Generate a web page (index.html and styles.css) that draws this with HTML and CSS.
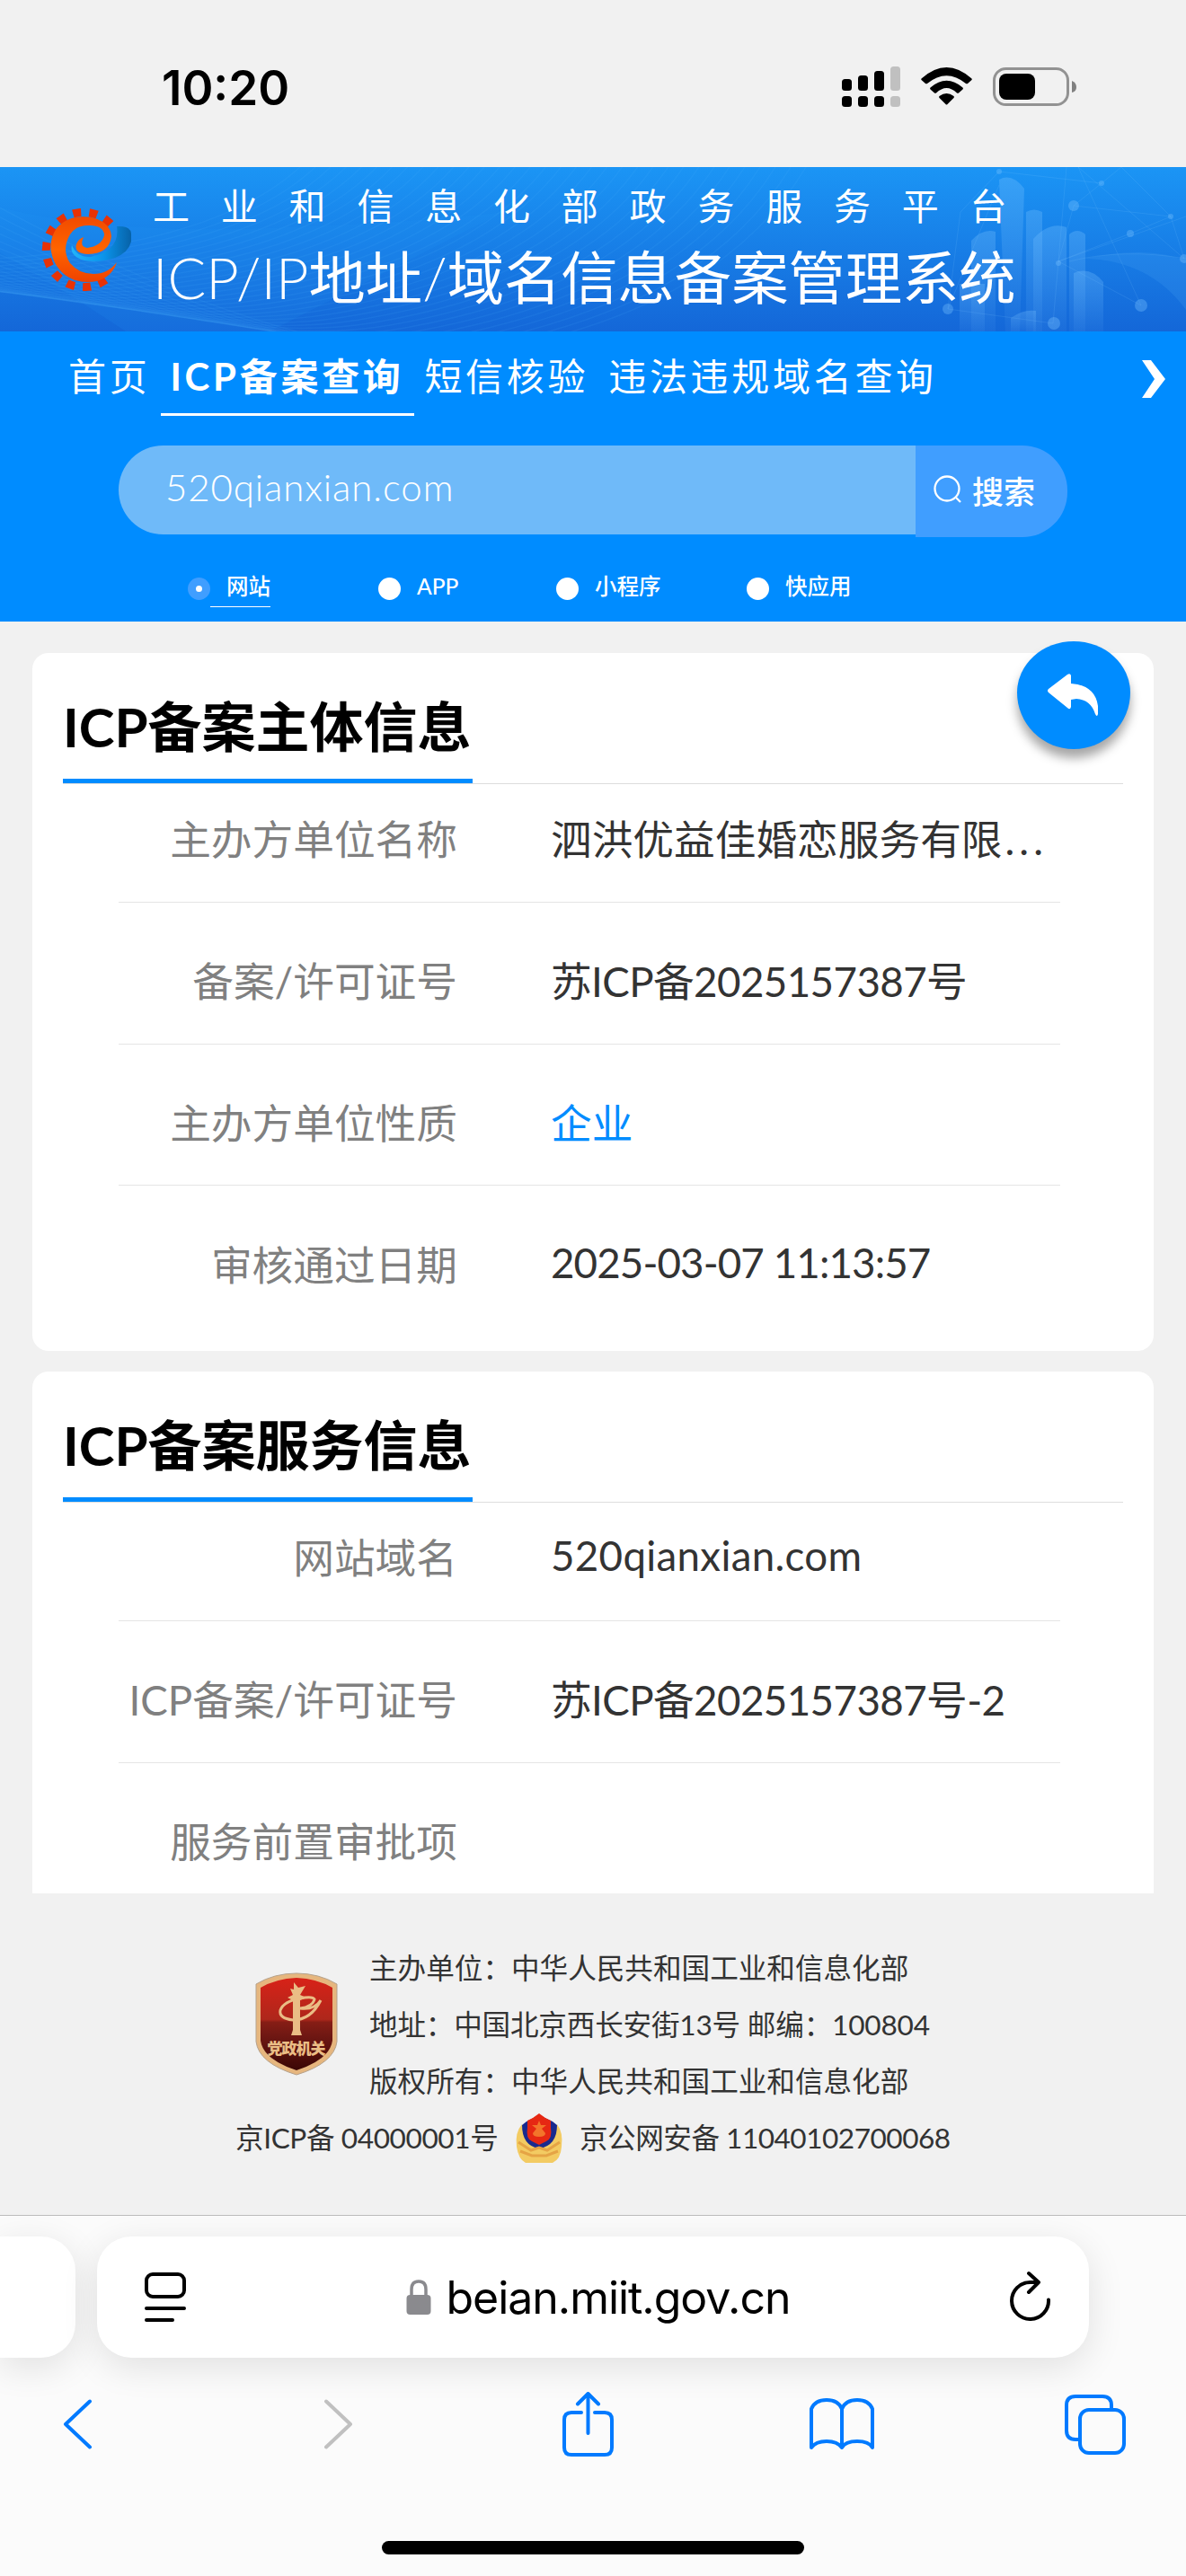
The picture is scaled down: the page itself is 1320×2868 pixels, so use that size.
FILE: index.html
```html
<!DOCTYPE html>
<html lang="zh-CN">
<head>
    <meta charset="UTF-8">
    <meta name="viewport" content="width=device-width, initial-scale=1.0">
    <title>ICP/IP地址/域名信息备案管理系统</title>
    <link rel="stylesheet" href="styles.css">
</head>
<body>
<div class="status">
    <span class="time">10:20</span>
    <svg class="statusIcons" width="262" height="50" viewBox="937 72 262 50">
        <g fill="#000">
            <rect x="937" y="88" width="11" height="13" rx="3.500"/>
            <rect x="955" y="84" width="11" height="17" rx="3.500"/>
            <rect x="973" y="79" width="11" height="22" rx="3.500"/>
            <rect x="937" y="107" width="11" height="12" rx="3.500"/>
            <rect x="955" y="107" width="11" height="12" rx="3.500"/>
            <rect x="973" y="107" width="11" height="12" rx="3.500"/>
        </g>
        <g fill="#c0c0c0">
            <rect x="991" y="74" width="11" height="27" rx="3.500"/>
            <rect x="991" y="107" width="11" height="12" rx="3.500"/>
        </g>
        <path d="M1025.500 87.500Q1053.500 62.500 1081.500 87.500Q1082 88.500 1081.500 89L1077 93Q1076 93.500 1075 93Q1053.500 75.500 1032 93Q1031 93.500 1030 93L1025.500 89Q1025 88.500 1025.500 87.500Z"/>
        <path d="M1035.500 97.500Q1053.500 82 1071.500 97.500Q1072.500 98.500 1071.500 99.500L1067 103.500Q1066 104 1065 103.500Q1053.500 92.500 1042 103.500Q1041 104 1040 103.500L1035.500 99.500Q1034.500 98.500 1035.500 97.500Z"/>
        <path d="M1045.500 107Q1053.500 101 1061.500 107Q1062.500 108 1061.500 109L1054.500 116Q1053.500 117 1052.500 116L1045.500 109Q1044.500 108 1045.500 107Z"/>
        <rect x="1106.500" y="76.500" width="82" height="40" rx="13" fill="none" stroke="#929292" stroke-width="3"/>
        <rect x="1112" y="82" width="40" height="29" rx="8"/>
        <path d="M1193 90q5 2 5 7t-5 6z" fill="#808080"/>
    </svg>
</div>

<div class="banner">
    <svg class="bannerArt" viewBox="0 0 1320 183" preserveAspectRatio="none">
        <defs>
            <linearGradient id="tower" x1="0" y1="0" x2="0" y2="1">
                <stop offset="0" stop-color="#7cc4ff" stop-opacity=".3"/>
                <stop offset="1" stop-color="#7cc4ff" stop-opacity=".06"/>
            </linearGradient>
        </defs>
        <path d="M0 45Q120 75 300 68T560 50L300 183H140Q60 130 0 95Z" fill="#2a9cf5" opacity=".13"/>
        <g id="waves" fill="none" stroke="#56b9ff" stroke-opacity=".11" stroke-width="1.500"></g>
        <g fill="url(#tower)">
            <path d="M1112 14q14-8 28 10l-5 159h-16z"/>
            <path d="M1081 82q13-14 27-10v111h-27z"/>
            <path d="M1150 80q18-20 37-13v116h-37z"/>
            <path d="M1142 50q9-5 18 0v133h-18z"/>
            <path d="M1190 75q9-8 18 0v108h-18z"/>
            <path d="M1195 118q18-8 33 10v55h-33z"/>
            <path d="M1068 130h28v53h-28z"/>
            <path d="M1125 168q14-10 28-8v23h-28z"/>
        </g>
        <g fill="none" stroke="#8accff" stroke-opacity=".14" stroke-width="1">
            <path d="M1112 5L1226 18L1248 0M1226 18L1195 43L1178 105L1320 55M1195 43L1303 55L1258 74L1178 105M1248 0L1303 55M1200 0L1318 102L1303 55M1112 5L1069 50L1055 158L1112 20M1187 0L1178 105L1270 154L1200 0M1055 158L1172 174L1178 105"/>
            <path d="M1190 105Q1250 90 1320 102"/>
        </g>
        <path d="M1208 102q65-15 112 2v55q-40-55-112-57z" fill="#4da5f5" opacity=".2"/>
        <g fill="#7cc4ff" fill-opacity=".35">
            <circle cx="1112" cy="5" r="3"/>
            <circle cx="1226" cy="18" r="3"/>
            <circle cx="1195" cy="43" r="6"/>
            <circle cx="1303" cy="55" r="3"/>
            <circle cx="1258" cy="74" r="4"/>
            <circle cx="1178" cy="107" r="3"/>
            <circle cx="1318" cy="102" r="5"/>
            <circle cx="1055" cy="158" r="6"/>
            <circle cx="1173" cy="174" r="7"/>
            <circle cx="1270" cy="154" r="7"/>
        </g>
    </svg>
    <svg class="logo" width="100" height="92" viewBox="0 0 100 92">
        <defs>
            <linearGradient id="orange" x1="0" y1="0" x2="0" y2="1">
                <stop offset="0" stop-color="#f04a00"/>
                <stop offset=".5" stop-color="#ff6400"/>
                <stop offset="1" stop-color="#ee4200"/>
            </linearGradient>
            <linearGradient id="swoosh">
                <stop offset="0" stop-color="#22b4fa"/>
                <stop offset=".55" stop-color="#0a93ea"/>
                <stop offset="1" stop-color="#0762a8"/>
            </linearGradient>
        </defs>
        <g id="teeth" fill="#e83205"></g>
        <path d="M84 20Q99 19 100 28V37Q97 49 82 55Q64 61 48 58Q31 53 34 41Q40 55 55 54Q88 47 84 20Z" fill="url(#swoosh)"/>
        <path d="M84 60Q79 76 62 81Q32 86 17 64Q4 42 17 22Q31 6 56 10Q77 15 78 31Q76 50 52 51Q36 50 39 40Q41 34 47 32Q42 43 51 44Q67 42 70 30Q70 20 55 19Q39 18 32 29Q22 46 32 61Q42 73 58 73Q74 73 84 60Z" fill="url(#orange)"/>
    </svg>
    <div class="bannerText">
        <div class="platform">工业和信息化部政务服务平台</div>
        <div class="system"><span>ICP/IP</span>地址<span>/</span>域名信息备案管理系统</div>
    </div>
</div>

<div class="top">
    <div class="nav">
        <a>首页</a>
        <a class="active">ICP备案查询</a>
        <a>短信核验</a>
        <a>违法违规域名查询</a>
        <svg class="navArrow" width="26" height="42" viewBox="0 0 26 42"><path d="M0 0H10L26 21L10 42H0L14 21Z" fill="#fff"/></svg>
    </div>
    <div class="search">
        <div class="searchInput">520qianxian.com</div>
        <div class="searchButton">
            <svg width="32" height="32" viewBox="0 0 32 32" fill="none" stroke="#fff" stroke-width="2.300"><circle cx="15" cy="15" r="13.500"/><path d="M25 25l5 5"/></svg>
            搜索
        </div>
    </div>
    <div class="radios">
        <div class="radio checked"><i></i><span>网站</span></div>
        <div class="radio"><i></i><span>APP</span></div>
        <div class="radio"><i></i><span>小程序</span></div>
        <div class="radio"><i></i><span>快应用</span></div>
    </div>
</div>

<div class="content">
    <div class="card">
        <div class="cardTitle"><h2>ICP备案主体信息</h2></div>
        <div class="row"><span class="label">主办方单位名称</span><span class="value">泗洪优益佳婚恋服务有限<span class="dots">...</span></span></div>
        <div class="row"><span class="label">备案/许可证号</span><span class="value number">苏ICP备2025157387号</span></div>
        <div class="row"><span class="label">主办方单位性质</span><span class="value blue">企业</span></div>
        <div class="row"><span class="label">审核通过日期</span><span class="value date">2025-03-07 11:13:57</span></div>
    </div>
    <div class="card cut">
        <div class="cardTitle"><h2>ICP备案服务信息</h2></div>
        <div class="row"><span class="label">网站域名</span><span class="value domain">520qianxian.com</span></div>
        <div class="row"><span class="label">ICP备案/许可证号</span><span class="value number">苏ICP备2025157387号-2</span></div>
        <div class="row"><span class="label">服务前置审批项</span><span class="value"></span></div>
    </div>
    <div class="back">
        <svg width="56" height="48" viewBox="0 0 56 48"><path d="M26 2V11Q53 13 56 36V45Q55 49 53 45Q48 29 32 28L26 29V37Q25 41 22 38L1 21Q-1 19 1 17L22 1Q25-1 26 2Z" fill="#fff"/></svg>
    </div>
</div>

<div class="footer">
    <div class="footerTop">
        <svg class="shield" width="92" height="116" viewBox="0 0 92 116">
            <defs>
                <linearGradient id="red" x1="0" y1="0" x2="0" y2="1">
                    <stop offset="0" stop-color="#d82218"/>
                    <stop offset=".45" stop-color="#ae271b"/>
                    <stop offset=".48" stop-color="#861d15"/>
                    <stop offset=".62" stop-color="#701813"/>
                    <stop offset="1" stop-color="#3a0705"/>
                </linearGradient>
            </defs>
            <path d="M46 1Q71 1 91 13V77Q88 101 46 114Q4 101 1 77V13Q21 1 46 1Z" fill="#e6b67e" stroke="#b5a28c" stroke-width="1"/>
            <path d="M46 6Q69 7 86 17V76Q83 97 46 109Q9 97 6 76V17Q23 7 46 6Z" fill="url(#red)"/>
            <path d="M43 11L48 17L56 15L50 25L57 28L50 31V64L52 70H40L42 64V31L36 28L42 25L39 18L43 19Z" fill="#eabd85"/>
            <path d="M73 31Q62 53 42 53Q26 51 28 42Q32 32 50 29Q64 26 66 30Q64 38 50 40Q66 42 73 31Z" fill="none" stroke="#eabd85" stroke-width="3"/>
            <text class="shieldText" x="46" y="91" text-anchor="middle" textLength="65">党政机关</text>
        </svg>
        <div class="footerLines">
            <p>主办单位：中华人民共和国工业和信息化部</p>
            <p class="addr">地址：中国北京西长安街13号 邮编：100804</p>
            <p>版权所有：中华人民共和国工业和信息化部</p>
        </div>
    </div>
    <div class="footerBottom">
        <span class="icp">京ICP备 04000001号</span>
        <svg class="police" width="54" height="57" viewBox="0 0 54 57">
            <path d="M8 13Q0 22 2 38Q4 52 12 56H42Q51 52 52 38Q54 22 47 13Q45 37 27 38Q10 37 8 13Z" fill="#f3cb62"/>
            <path d="M13 10L27 3L42 10L47 14Q47 37 27 40Q8 37 8 14Z" fill="#192a8e"/>
            <path d="M27 1L34 6L40 9L40 17Q42 29 35 32L27 36L19 32Q12 29 14 17L14 9L20 6Z" fill="#e62813"/>
            <path d="M27 9l2 5h6l-5 4 4 5q0 4-7 4t-7-4l4-5-5-4h6z" fill="#f3752a"/>
            <path d="M4 33l14 9 9-3 9 3 14-9M6 43l13 5h16l13-5" fill="none" stroke="#e5a445" stroke-width="3"/>
        </svg>
        <span class="gongan">京公网安备 11040102700068</span>
    </div>
</div>

<div class="browser">
    <div class="addressRow">
        <div class="prevTab"></div>
        <div class="address">
            <svg width="46" height="56" viewBox="0 0 46 56" fill="none" stroke="#000" stroke-width="4" stroke-linecap="round"><rect x="2" y="2" width="42" height="25" rx="7"/><path d="M2 40H44M2 53H31"/></svg>
            <div class="url">
                <svg width="28" height="40" viewBox="0 0 28 40"><path d="M6 19V11Q6 2 14 2T22 11V19" fill="none" stroke="#8a8a8e" stroke-width="3.500"/><rect x="0.500" y="17" width="27" height="22" rx="4" fill="#8a8a8e"/></svg>
                <span>beian.miit.gov.cn</span>
            </div>
            <svg class="reload" width="46" height="56" viewBox="0 0 46 56" fill="none" stroke="#000" stroke-width="4" stroke-linecap="round" stroke-linejoin="round"><path d="M43 32.500A20.500 20.500 0 1 1 22.500 13H31M21 3L32 13L21 24"/></svg>
        </div>
    </div>
    <div class="tools">
        <svg width="33" height="56" viewBox="0 0 33 56"><path d="M30 2.500L3 28L30 53.500"/></svg>
        <svg class="off" width="33" height="56" viewBox="0 0 33 56"><path d="M3 2.500L30 28L3 53.500"/></svg>
        <svg class="share" width="57" height="72" viewBox="0 0 57 72"><path d="M21 23H10Q2 23 2 31V62Q2 70 10 70H47Q55 70 55 62V31Q55 23 47 23H36M28.500 46V2M17 13.500L28.500 2L40 13.500"/></svg>
        <svg class="book" width="72" height="60" viewBox="0 0 72 60"><path d="M36 56V13Q32 3 19 3T2 13V56Q7 49 19 49T36 56Q40 49 53 49T70 56V13Q66 3 53 3T36 13"/></svg>
        <svg class="tabs" width="68" height="67" viewBox="0 0 68 67"><path d="M16 50H12Q2 50 2 40V12Q2 2 12 2H42Q52 2 52 12V16"/><rect x="17" y="17" width="49" height="48" rx="10"/></svg>
    </div>
    <div class="home"></div>
</div>
<script>
    // curved lines of the banner background
    let lines = "";
    for (let i = 0; i < 34; i++) {
        const x = 900 - i * 17;
        lines += `<path d="M${x} -5Q${x - 90} ${150 - i * 2} ${x - 330} ${200 - i * 3}T${x - 1050} ${-40 + i * 4}"/>`;
    }
    document.querySelector("#waves").innerHTML = lines;

    // teeth of the gear logo
    let teeth = "";
    for (let a = -50; a >= -310; a -= 25) {
        teeth += `<path d="M-5-46H5L4-37H-4Z" transform="translate(47 46) rotate(${a + 90})"/>`;
    }
    document.querySelector("#teeth").innerHTML = teeth;
</script>
</body>
</html>
```
FILE: styles.css
```css
* {
    box-sizing: border-box;
}

body {
    margin: 0;
    width: 1320px;
    height: 2868px;
    overflow: hidden;
    background-color: #f1f1f1;
    font-family: Lato, "Noto Sans CJK SC", sans-serif;
    color: #333;
}

svg {
    display: block;
    flex: none;
}

.status {
    display: flex;
    justify-content: space-between;
    height: 186px;
    padding: 72px 121px 0 180px;
}

.time {
    font-family: Inter, sans-serif;
    font-size: 53px;
    font-weight: 600;
    line-height: 53px;
    color: #000;
}

.banner {
    position: relative;
    display: flex;
    height: 183px;
    background: linear-gradient(#1b95f5, #1467d8);
    color: #fff;
    overflow: hidden;
}

.bannerArt {
    position: absolute;
    left: 0;
    top: 0;
    width: 1320px;
    height: 183px;
}

.logo {
    position: relative;
    margin: 46px 0 0 46px;
}

.bannerText {
    position: relative;
    margin-left: 24px;
    white-space: nowrap;
}

.platform {
    margin-top: 14px;
    font-size: 41px;
    line-height: 60px;
    letter-spacing: 34.800px;
}

.system {
    font-size: 63.300px;
    line-height: 90px;
    margin-top: 4px;
}

.system span {
    font-weight: 300;
}

.top {
    height: 323px;
    background-color: #008cff;
    color: #fff;
}

.nav {
    display: flex;
    height: 94px;
    padding-left: 76px;
    font-size: 42px;
    line-height: 101px;
    letter-spacing: 3.700px;
    white-space: nowrap;
}

.nav a {
    margin-right: 22px;
}

.nav .active {
    width: 282px;
    margin: 0 11px 0 -10px;
    padding-left: 10px;
    border-bottom: 3px solid #fff;
    font-weight: bold;
}

.nav .navArrow {
    margin: 32px 23px 0 auto;
}

.search {
    display: flex;
    width: 1056px;
    margin: 33px 0 0 132px;
}

.searchInput {
    width: 887px;
    height: 99px;
    padding-left: 52px;
    border-radius: 50px 0 0 50px;
    background-color: #6fbaf9;
    font-size: 42px;
    font-weight: 300;
    line-height: 92px;
    letter-spacing: 0.900px;
}

.searchButton {
    display: flex;
    align-items: center;
    gap: 11px;
    width: 169px;
    height: 102px;
    padding: 0 0 4px 20px;
    border-radius: 0 50px 50px 0;
    background-color: #409eff;
    font-size: 35px;
    font-weight: 500;
}

.radios {
    display: flex;
    margin: 37px 0 0 209px;
    font-size: 24.500px;
    font-weight: 500;
}

.radio {
    display: flex;
    align-items: center;
    width: 212px;
    height: 40px;
    line-height: 37px;
}

.radio:nth-child(2) {
    width: 198px;
}

.radio i {
    width: 25px;
    height: 25px;
    border-radius: 50%;
    background-color: #fff;
}

.radio span {
    height: 42px;
    padding-left: 18px;
}

.checked i {
    border: 9px solid #409eff;
}

.checked span {
    border-bottom: 1px solid #fff;
}

.content {
    position: relative;
    padding: 35px 36px 0;
}

.card {
    height: 777px;
    margin-bottom: 23px;
    padding: 0 34px;
    border-radius: 18px;
    background-color: #fff;
}

.cut {
    height: 581px;
    margin-bottom: 0;
    border-radius: 18px 18px 0 0;
}

.cardTitle {
    height: 146px;
    border-bottom: 1px solid #ddd;
}

.cardTitle h2 {
    width: 456px;
    height: 145px;
    margin: 0;
    padding-top: 37px;
    border-bottom: 5px solid #008cff;
    font-size: 60px;
    line-height: 90px;
    white-space: nowrap;
    color: #000;
}

.row {
    display: flex;
    align-items: center;
    height: 157.700px;
    margin: 0 70px 0 62px;
    padding-top: 13px;
    border-bottom: 1px solid #e5e5e5;
    font-size: 45.700px;
    white-space: nowrap;
}

.cardTitle + .row {
    height: 132px;
    padding: 0 0 14px;
}

.row:last-child {
    border: none;
}

.label {
    width: 377px;
    text-align: right;
    color: #808080;
}

.value {
    margin-left: 104px;
}

.dots {
    padding-left: 3px;
    letter-spacing: 5px;
}

.number {
    letter-spacing: -0.600px;
}

.date {
    letter-spacing: -0.900px;
}

.domain {
    letter-spacing: 0.300px;
}

.blue {
    color: #008cff;
}

.back {
    position: absolute;
    right: 62px;
    top: 22px;
    display: flex;
    align-items: center;
    justify-content: center;
    width: 126px;
    height: 120px;
    padding: 0 3px 0 0;
    border-radius: 63px / 57px 57px 63px 63px;
    background-color: #008cff;
    box-shadow: 0 10px 12px rgba(0, 0, 0, 0.35);
}

.footer {
    height: 358px;
    padding-top: 52px;
    font-size: 31.600px;
    line-height: 63px;
    white-space: nowrap;
}

.footerTop {
    display: flex;
    padding-left: 284px;
}

.shield {
    margin-top: 36px;
}

.shieldText {
    font-size: 17px;
    font-weight: 900;
    fill: #eabd85;
}

.footerLines {
    margin-left: 35px;
}

.footerLines p {
    margin: 0;
}

.footerLines .addr {
    letter-spacing: -0.200px;
}

.footerBottom {
    display: flex;
    align-items: center;
    padding-left: 262px;
}

.icp {
    width: 294px;
    letter-spacing: -0.400px;
}

.police {
    margin: 0 18px 0 17px;
}

.gongan {
    letter-spacing: -0.500px;
}

.browser {
    height: 402px;
    border-top: 1px solid #bcbcbc;
    background-color: #fbfbfb;
    overflow: hidden;
}

.addressRow {
    display: flex;
    gap: 24px;
    padding-top: 23px;
}

.prevTab, .address {
    height: 135px;
    background-color: #fff;
    box-shadow: 0 10px 40px rgba(0, 0, 0, 0.11);
}

.prevTab {
    width: 84px;
    border-radius: 0 38px 38px 0;
}

.address {
    display: flex;
    align-items: center;
    justify-content: space-between;
    width: 1104px;
    padding: 0 42px 0 53px;
    border-radius: 38px;
}

.url {
    display: flex;
    align-items: center;
    gap: 17px;
    font-family: Inter, sans-serif;
    font-size: 50px;
    letter-spacing: -1.050px;
    color: #000;
}

.reload {
    margin-bottom: 4px;
}

.tools {
    display: flex;
    align-items: center;
    height: 74px;
    margin: 37px 0 0 70px;
    fill: none;
    stroke: #007aff;
    stroke-width: 4;
    stroke-linecap: round;
    stroke-linejoin: round;
}

.tools .off {
    margin: 0 233px 0 257px;
    stroke: #c0c0c0;
}

.book {
    margin: 0 212px 0 218px;
}

.home {
    width: 470px;
    height: 15px;
    margin: 93px auto 0;
    border-radius: 8px;
    background-color: #000;
}
```
